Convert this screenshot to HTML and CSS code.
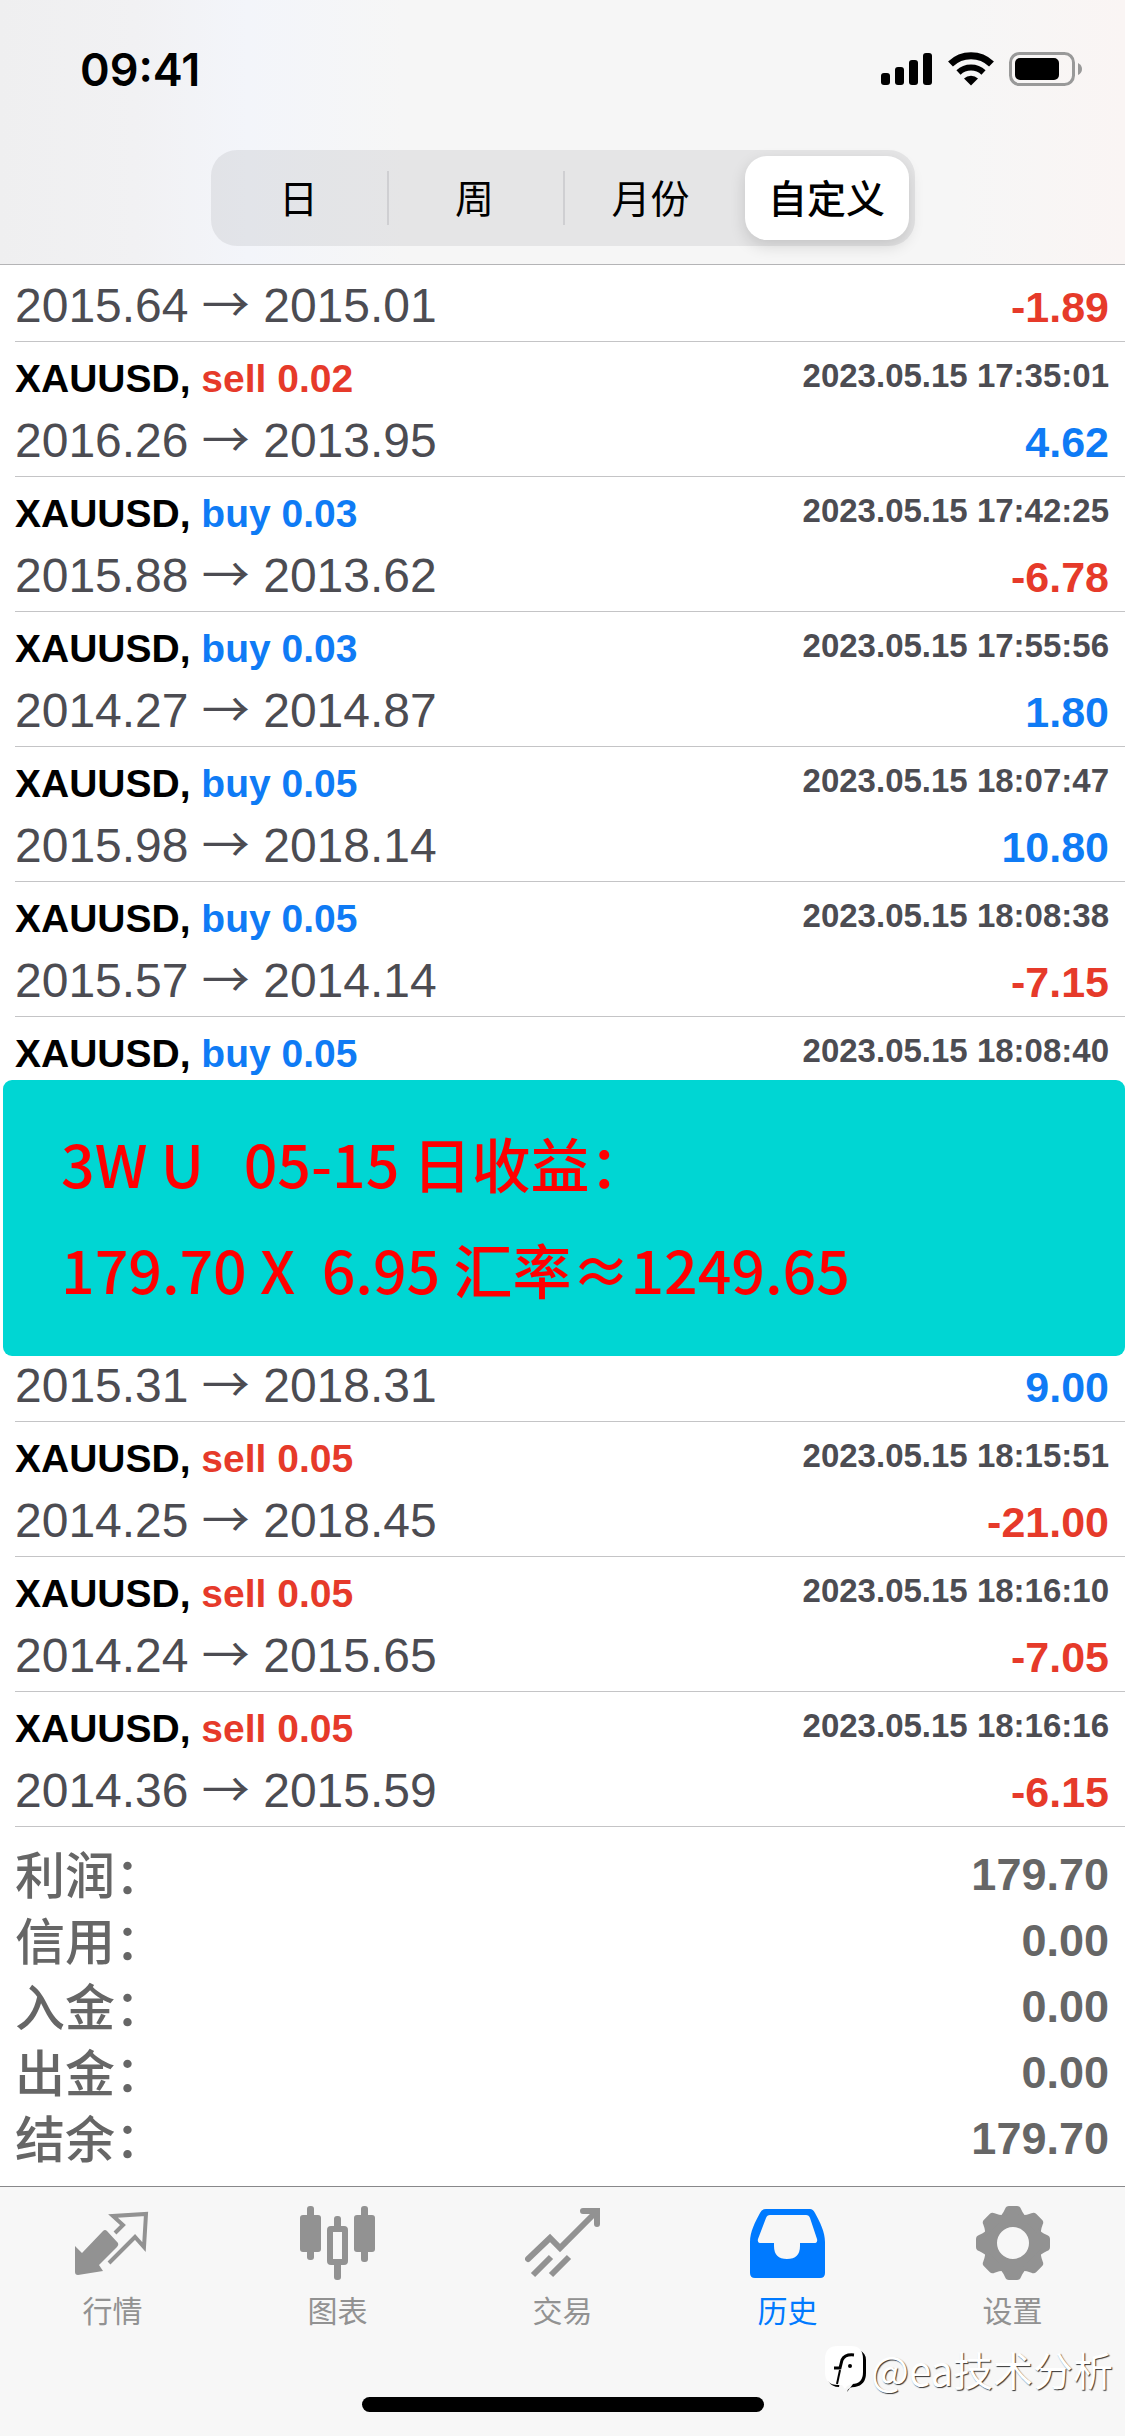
FILE: index.html
```html
<!DOCTYPE html>
<html lang="zh-CN">
<head>
    <meta charset="UTF-8">
    <meta name="viewport" content="width=device-width, initial-scale=1.0">
    <title>历史</title>
    <link rel="stylesheet" href="styles.css">
</head>
<body>
    <header class="header">
        <div class="status">
            <span class="clock">09:41</span>
            <div class="status-icons">
                <svg width="52" height="34" viewBox="0 0 52 34">
                    <rect x="0" y="21" width="9" height="12" rx="3"/>
                    <rect x="14" y="15" width="9" height="18" rx="3"/>
                    <rect x="28" y="8" width="9" height="25" rx="3"/>
                    <rect x="42" y="1" width="9" height="32" rx="3"/>
                </svg>
                <svg width="46" height="34" viewBox="0 0 46 34">
                    <path d="M2.500 12A29.500 29.500 0 0 1 43.500 12" fill="none" stroke="#000" stroke-width="7"/>
                    <path d="M10.500 20.500A18 18 0 0 1 35.500 20.500" fill="none" stroke="#000" stroke-width="6"/>
                    <path d="M16 26.500A10 10 0 0 1 30 26.500L23 33.500Z"/>
                </svg>
                <svg width="74" height="34" viewBox="0 0 74 34">
                    <rect x="1.500" y="1.500" width="63" height="31" rx="9" fill="none" stroke="#999" stroke-width="3"/>
                    <rect x="6" y="6" width="44" height="22" rx="5"/>
                    <path d="M69 11q4 2 4 6t-4 6z" fill="#999"/>
                </svg>
            </div>
        </div>
        <div class="segments">
            <button type="button" class="segment">日</button>
            <button type="button" class="segment">周</button>
            <button type="button" class="segment">月份</button>
            <button type="button" class="segment selected">自定义</button>
        </div>
    </header>

    <main class="history">
        <div class="trade trade-scrolled">
            <div class="line"><span class="symbol">XAUUSD, <span class="buy">buy</span></span></div>
            <div class="line prices"><span class="price">2015.64 <span class="arrow">→</span> 2015.01</span><span class="amount loss">-1.89</span></div>
        </div>
        <div class="trade">
            <div class="line"><span class="symbol">XAUUSD, <span class="sell">sell 0.02</span></span><time class="date">2023.05.15 17:35:01</time></div>
            <div class="line prices"><span class="price">2016.26 <span class="arrow">→</span> 2013.95</span><span class="amount gain">4.62</span></div>
        </div>
        <div class="trade">
            <div class="line"><span class="symbol">XAUUSD, <span class="buy">buy 0.03</span></span><time class="date">2023.05.15 17:42:25</time></div>
            <div class="line prices"><span class="price">2015.88 <span class="arrow">→</span> 2013.62</span><span class="amount loss">-6.78</span></div>
        </div>
        <div class="trade">
            <div class="line"><span class="symbol">XAUUSD, <span class="buy">buy 0.03</span></span><time class="date">2023.05.15 17:55:56</time></div>
            <div class="line prices"><span class="price">2014.27 <span class="arrow">→</span> 2014.87</span><span class="amount gain">1.80</span></div>
        </div>
        <div class="trade">
            <div class="line"><span class="symbol">XAUUSD, <span class="buy">buy 0.05</span></span><time class="date">2023.05.15 18:07:47</time></div>
            <div class="line prices"><span class="price">2015.98 <span class="arrow">→</span> 2018.14</span><span class="amount gain">10.80</span></div>
        </div>
        <div class="trade">
            <div class="line"><span class="symbol">XAUUSD, <span class="buy">buy 0.05</span></span><time class="date">2023.05.15 18:08:38</time></div>
            <div class="line prices"><span class="price">2015.57 <span class="arrow">→</span> 2014.14</span><span class="amount loss">-7.15</span></div>
        </div>
        <div class="trade trade-above">
            <div class="line"><span class="symbol">XAUUSD, <span class="buy">buy 0.05</span></span><time class="date">2023.05.15 18:08:40</time></div>
        </div>

        <!-- дневной итог -->
        <section class="banner">
            <p>3W U   05-15 日收益：</p>
            <p>179.70 X  6.95 汇率≈1249.65</p>
        </section>

        <div class="trade trade-below">
            <div class="line prices"><span class="price">2015.31 <span class="arrow">→</span> 2018.31</span><span class="amount gain">9.00</span></div>
        </div>
        <div class="trade">
            <div class="line"><span class="symbol">XAUUSD, <span class="sell">sell 0.05</span></span><time class="date">2023.05.15 18:15:51</time></div>
            <div class="line prices"><span class="price">2014.25 <span class="arrow">→</span> 2018.45</span><span class="amount loss">-21.00</span></div>
        </div>
        <div class="trade">
            <div class="line"><span class="symbol">XAUUSD, <span class="sell">sell 0.05</span></span><time class="date">2023.05.15 18:16:10</time></div>
            <div class="line prices"><span class="price">2014.24 <span class="arrow">→</span> 2015.65</span><span class="amount loss">-7.05</span></div>
        </div>
        <div class="trade">
            <div class="line"><span class="symbol">XAUUSD, <span class="sell">sell 0.05</span></span><time class="date">2023.05.15 18:16:16</time></div>
            <div class="line prices"><span class="price">2014.36 <span class="arrow">→</span> 2015.59</span><span class="amount loss">-6.15</span></div>
        </div>

        <dl class="summary">
            <div class="total"><dt>利润：</dt><dd>179.70</dd></div>
            <div class="total"><dt>信用：</dt><dd>0.00</dd></div>
            <div class="total"><dt>入金：</dt><dd>0.00</dd></div>
            <div class="total"><dt>出金：</dt><dd>0.00</dd></div>
            <div class="total"><dt>结余：</dt><dd>179.70</dd></div>
        </dl>
    </main>

    <footer class="footer">
        <nav class="tabs">
            <a href="#quotes" class="tab">
                <svg class="tab-icon" viewBox="0 0 76 76">
                    <path d="M0 41L7 48L28 26Q30 24 32 26L43 38Q44 40 42 42L24 60L28 66L3 70Q0 70 0 67Z"/>
                    <path d="M40 28L48 20L38 11L71 9L69 42L60 32L34 58" fill="none" stroke="currentColor" stroke-width="4"/>
                </svg>
                <span>行情</span>
            </a>
            <a href="#charts" class="tab">
                <svg class="tab-icon" viewBox="0 0 76 76">
                    <rect x="0" y="10" width="21" height="37" rx="3"/>
                    <rect x="7" y="1" width="7" height="54" rx="3"/>
                    <rect x="54" y="10" width="21" height="37" rx="3"/>
                    <rect x="61" y="1" width="7" height="56" rx="3"/>
                    <rect x="34" y="11" width="7" height="14" rx="3"/>
                    <rect x="34" y="56" width="7" height="19" rx="3"/>
                    <rect x="30" y="24" width="15" height="33" rx="1" fill="none" stroke="currentColor" stroke-width="6"/>
                </svg>
                <span>图表</span>
            </a>
            <a href="#trade" class="tab">
                <svg class="tab-icon outline" viewBox="0 0 76 76" stroke="currentColor" stroke-width="6">
                    <path d="M3 54L25 33L35 43L70 8M58 6H72V19" stroke-linecap="round"/>
                    <path d="M8 70L26 52M26 70L44 52"/>
                </svg>
                <span>交易</span>
            </a>
            <a href="#history" class="tab active">
                <svg class="tab-icon" viewBox="0 0 76 76">
                    <path fill-rule="evenodd" d="M16 4H60Q63 4 65 8C70 17 75 27 75 37V68Q75 73 70 73H5Q0 73 0 68V37C0 27 5 17 10 8Q12 4 16 4ZM20 10Q17 10 16 13L8 34Q7 38 11 38H24V41Q24 54 37 54Q50 54 50 41V38H64Q68 38 67 34L60 13Q59 10 56 10Z"/>
                </svg>
                <span>历史</span>
            </a>
            <a href="#settings" class="tab">
                <svg class="tab-icon" viewBox="0 0 76 76">
                    <defs>
                        <path id="tooth" d="M22 14Q27 11 30 4Q31 1 34 1H42Q45 1 46 4Q49 11 54 14Z"/>
                    </defs>
                    <circle cx="38" cy="38" r="23" fill="none" stroke="currentColor" stroke-width="14"/>
                    <use href="#tooth"/>
                    <use href="#tooth" transform="rotate(45 38 38)"/>
                    <use href="#tooth" transform="rotate(90 38 38)"/>
                    <use href="#tooth" transform="rotate(135 38 38)"/>
                    <use href="#tooth" transform="rotate(180 38 38)"/>
                    <use href="#tooth" transform="rotate(225 38 38)"/>
                    <use href="#tooth" transform="rotate(270 38 38)"/>
                    <use href="#tooth" transform="rotate(315 38 38)"/>
                </svg>
                <span>设置</span>
            </a>
        </nav>
        <div class="home-indicator"></div>
        <div class="watermark">
            <svg width="42" height="46" viewBox="0 0 42 46">
                <path d="M22 46Q23 41 30 41Q41 39 41 27V14Q41 7 34 4L28 38ZM3 35Q7 41 14 41L16 28Z"/>
                <path d="M13 0H26Q38 0 38 13V26Q38 38 27 38Q22 39 20 43L17 39H13Q0 39 0 26V13Q0 0 13 0Z" fill="#fff"/>
                <path d="M9 22H15L17 14Q20 8 29 9" fill="none" stroke="#000" stroke-width="3"/>
                <path d="M15 24L12 38" fill="none" stroke="#000" stroke-width="2"/>
                <circle cx="25" cy="20" r="2"/>
            </svg>
            <span>@ea技术分析</span>
        </div>
    </footer>
</body>
</html>
```
FILE: styles.css
```css
:root {
    --blue: #007aff;
    --trade-blue: #0f7bf5;
    --red: #e63a2a;
    --price-color: #4c4c52;
    --total-color: #666;
    --tab-color: #929292;
    --line-color: #c4c4c6;
    --bar-bg: #f7f7f7;
    --cjk: 'Noto Sans CJK SC', sans-serif;
}

* {
    box-sizing: border-box;
    margin: 0;
    padding: 0;
}

body {
    display: flex;
    flex-direction: column;
    min-height: 100vh;
    font-family: 'Liberation Sans', 'Noto Sans CJK SC', sans-serif;
    background-color: #fff;
    overflow-x: hidden;
}

.header {
    position: relative;
    z-index: 1;
    padding-bottom: 18px;
    background: linear-gradient(to right, #efeff0 0%, #f1f1f3 12%, #f3f5fa 22%, #f6f6f6 36%, #f6f6f6 85%, #faf5f4 100%);
    border-bottom: 1px solid #b4b4b6;
}

.status {
    display: flex;
    justify-content: space-between;
    align-items: center;
    height: 138px;
    padding: 0 42px 0 80px;
}

.clock {
    font-family: Inter, sans-serif;
    font-size: 45px;
    font-weight: 600;
}

.status-icons {
    display: flex;
    gap: 15px;
}

.segments {
    display: flex;
    width: 63%;
    max-width: 704px;
    height: 96px;
    margin: 12px auto 0;
    background-color: rgba(110, 110, 118, 0.12);
    border-radius: 26px;
}

.segment {
    position: relative;
    flex: 1;
    padding-bottom: 4px;
    border: none;
    background: none;
    font-family: var(--cjk);
    font-size: 39px;
    line-height: 1;
    color: #000;
}

.segment + .segment:not(.selected)::before {
    content: '';
    position: absolute;
    left: 0;
    top: 21px;
    bottom: 21px;
    width: 2px;
    background-color: #cfcfd2;
}

.segment.selected {
    flex: 0 0 164px;
    margin: 6px;
    background-color: #fff;
    border-radius: 22px;
    font-weight: 500;
    box-shadow: 0 6px 16px rgba(0, 0, 0, 0.14);
}

.history {
    flex: 1;
}

.trade {
    margin-left: 15px;
    padding: 7px 16px 10px 0;
    border-bottom: 1px solid var(--line-color);
}

.line {
    display: flex;
    justify-content: space-between;
    align-items: center;
    height: 54px;
    white-space: nowrap;
}

.line + .line {
    margin-top: 9px;
}

.line.prices {
    align-items: baseline;
}

.trade-scrolled {
    margin-top: -58px;
}

.trade-above {
    padding-bottom: 2px;
    border-bottom: none;
}

.trade-below {
    padding-top: 1px;
}

.symbol {
    padding-top: 6px;
    font-size: 39px;
    font-weight: bold;
    color: #000;
}

.date {
    font-size: 33px;
    font-weight: bold;
    color: var(--price-color);
}

.price {
    font-size: 48px;
    line-height: 54px;
    color: var(--price-color);
}

.arrow {
    font-family: var(--cjk);
    line-height: 1;
}

.amount {
    font-size: 43px;
    font-weight: bold;
}

.buy, .gain {
    color: var(--trade-blue);
}

.sell, .loss {
    color: var(--red);
}

.banner {
    margin-left: 3px;
    padding: 30px 58px 34px;
    background-color: #00d6d3;
    border-radius: 9px;
}

.banner p {
    font-family: var(--cjk);
    font-size: 59px;
    font-weight: 500;
    line-height: 106px;
    color: #f00;
    white-space: pre;
}

.summary {
    padding: 15px 16px 14px 15px;
    color: var(--total-color);
}

.total {
    display: flex;
    justify-content: space-between;
    align-items: center;
    height: 66px;
}

.total dt {
    padding-bottom: 7px;
    font-family: var(--cjk);
    font-size: 50px;
    font-weight: 500;
    line-height: 1;
}

.total dd {
    font-size: 45px;
    font-weight: bold;
}

.footer {
    position: relative;
    padding-bottom: 24px;
    background-color: var(--bar-bg);
    border-top: 1px solid #88888a;
}

.tabs {
    display: flex;
    padding-top: 18px;
}

.tab {
    flex: 1;
    display: flex;
    flex-direction: column;
    align-items: center;
    gap: 8px;
    font-family: var(--cjk);
    font-size: 30px;
    line-height: 40px;
    color: var(--tab-color);
    text-decoration: none;
}

.tab.active {
    color: var(--blue);
}

.tab-icon {
    width: 76px;
    height: 76px;
    fill: currentColor;
}

.tab-icon.outline {
    fill: none;
}

.home-indicator {
    width: 402px;
    height: 15px;
    margin: 68px auto 0;
    background-color: #000;
    border-radius: 8px;
}

.watermark {
    position: absolute;
    right: 12px;
    bottom: 42px;
    display: flex;
    align-items: center;
    gap: 4px;
    font-family: var(--cjk);
    font-size: 40px;
    line-height: 50px;
    color: #fff;
    text-shadow: 1px 1px 1px #333;
}
```
